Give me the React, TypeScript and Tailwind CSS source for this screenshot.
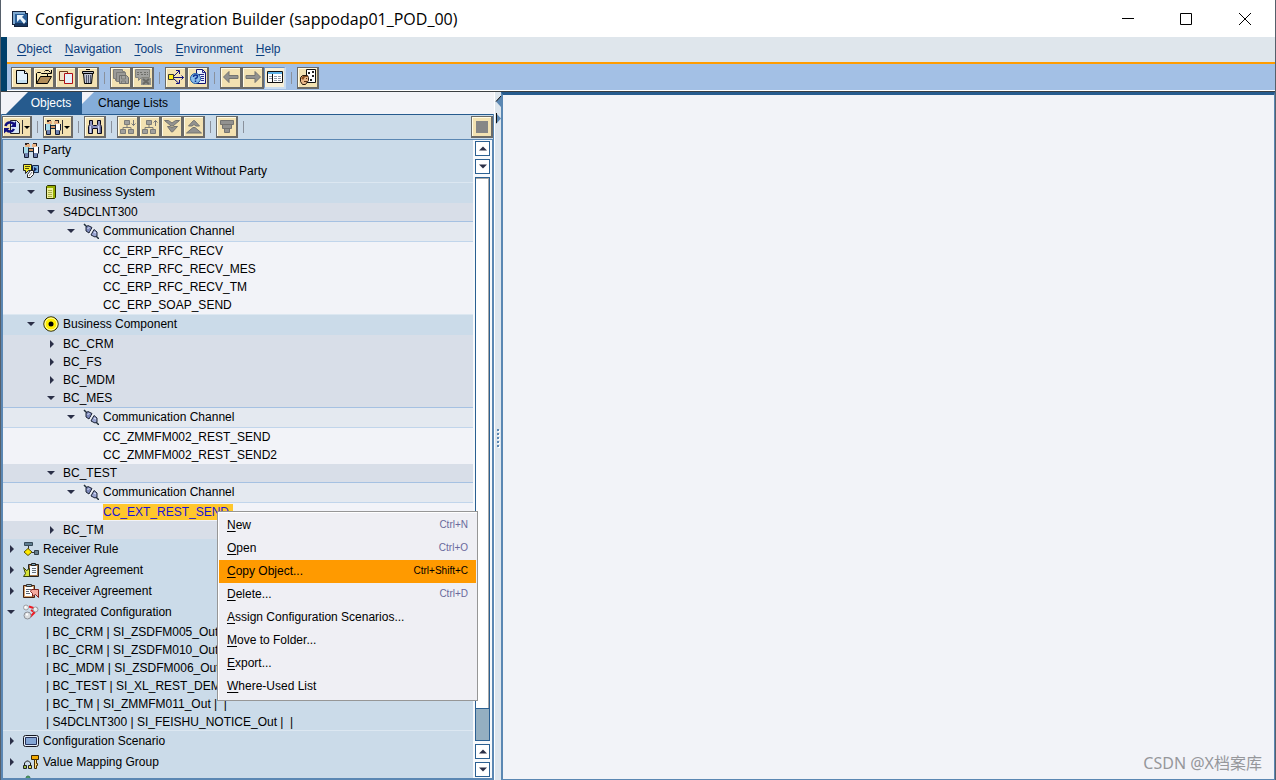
import { useState } from "react";
import type { ReactNode } from "react";
import clsx from "clsx";

function Icon({ children, w = 16, h = 16 }: { children: ReactNode; w?: number; h?: number }) {
  return (
    <svg width={w} height={h} viewBox={`0 0 ${w} ${h}`} fill="none" className="shrink-0" aria-hidden="true">
      {children}
    </svg>
  );
}

const AppIcon = () => (
  <Icon>
    <path d="M0 0h14v2h2v14H2v-2H0z" fill="#14233c" />
    <path d="M1 1h12v2H3v10H1z" fill="#7fa9d0" />
    <path d="M3 3h12v12H3z" fill="#2a5f98" />
    <path d="M3 12h12v3H3z" fill="#17365f" />
    <path d="M5 4h7l-2 2 4 4-2 3-4-5-3 3z" fill="#eaf5fd" />
  </Icon>
);

const NewIcon = () => (
  <Icon>
    <path d="M2.5 1.5h8l3 3v10h-11z" fill="#e3f1fa" stroke="#000" />
    <path d="M10.5 1.5v3h3" fill="#fff" stroke="#000" />
    <path d="M3 11h10v3H3z" fill="#c3dff0" />
  </Icon>
);

const OpenIcon = () => (
  <Icon>
    <path d="M.5 14.500v-10l1-1h3l1 1h6v3" fill="#f6e7b0" stroke="#000" />
    <path d="M.5 14.500l4-7h11l-4 7z" fill="#b08c58" stroke="#000" />
    <path d="M8.500 2.500l1-1h3l2 2M15.500 1v3.500H12" stroke="#000" />
  </Icon>
);

const CopyIcon = () => (
  <Icon>
    <path d="M1.500 2.500h8v9h-8z" fill="#f0e2c8" stroke="#6b3a1d" />
    <path d="M6.500 4.500h8v10h-8z" fill="#e4f0fa" stroke="#b00d14" />
  </Icon>
);

const TrashIcon = () => (
  <Icon>
    <path d="M6 .5h4M2.500 2.500h11v2h-11z" fill="#b8bcc8" stroke="#000" />
    <path d="M3.500 4.500h9l-1 10h-7z" fill="#c0c4d2" stroke="#000" />
    <path d="M6.500 6v8M8.500 6v8M10.500 6v8" stroke="#50566c" />
  </Icon>
);

const CopiesIcon = () => (
  <Icon>
    <path d="M.5.5h9v2h2v9h-9v-2h-2z" fill="#9a9a97" stroke="#7c7c79" />
    <path d="M3.500 3.500h9v9h-9z" fill="#9a9a97" stroke="#7c7c79" />
    <path d="M6.500 6.500h7l2 2v6h-9z" fill="#a2a29f" stroke="#6f6f6c" />
    <path d="M8.500 7v3h4V7M8.500 14v-2h4v2" stroke="#7c7c79" />
  </Icon>
);

const CancelIcon = () => (
  <Icon>
    <path d="M.5.5h14v8h-8l-3 3v-3h-3z" fill="#a2a29f" stroke="#84847e" />
    <path d="M2 3.500h6M9 3.500h4M2 5.500h3M6 5.500h7" stroke="#6f6f6a" strokeDasharray="2 1" />
    <path d="M6 9h10v7H6z" fill="#93938f" />
    <path d="M8 10l6 5M14 10l-6 5" stroke="#6a6a66" strokeWidth="2" />
  </Icon>
);

const WhereIcon = () => (
  <Icon>
    <path d="M5 8.500h10.500M6 7l5-5M6 10l5 4.500M8 1.500h3.500V5M13.500 6.500l2 2-2 2M8 14.500h3.500V11" stroke="#10107c" />
    <path d="M.5 5.500h5v5h-5z" fill="#ffee1c" stroke="#333" />
  </Icon>
);

const HelpIcon = () => (
  <Icon>
    <path d="M6.500.5h6l3 3v11h-9z" fill="#e8f1fb" stroke="#10106c" />
    <path d="M12.500.5v3h3M9 5.500h5M11 7.500h3M11 9.500h3M11 11.500h3" stroke="#29298b" />
    <circle cx="5.500" cy="9.500" r="5" fill="#8cc0ec" stroke="#1c5aa0" />
    <path d="M3.500 8q0-2 2-2t2 1.500-2 2v1M5.500 11.500v1.500" stroke="#0c2f94" strokeWidth="1.500" />
  </Icon>
);

const BackIcon = () => (
  <Icon>
    <path d="M.5 8L6 2.500v4h9v3H6v4z" fill="#929290" stroke="#747471" />
  </Icon>
);

const ForwardIcon = () => (
  <Icon>
    <path d="M15.500 8L10 2.500v4H1v3h9v4z" fill="#929290" stroke="#747471" />
  </Icon>
);

const ListIcon = () => (
  <Icon>
    <path d="M.5 2.500h15v11H.5z" fill="#fff" stroke="#111" />
    <path d="M1 3h14v2H1z" fill="#5cb2e8" />
    <path d="M2 7.500h3M2 9.500h3M7 7.500h3M11 7.500h3M7 9.500h3M11 9.500h3M7 11.500h3M11 11.500h3" stroke="#8f9aa8" />
    <path d="M5.500 5v8" stroke="#111" />
  </Icon>
);

const UserIcon = () => (
  <Icon>
    <path d="M6.500.5h9v13h-9z" fill="#fff" stroke="#111" />
    <path d="M8 3h2v2H8zM12 2h2v2h-2zM12 6h2v2h-2zM10 10h2v2h-2z" fill="#222" />
    <path d="M.5 8.500l2-2h5l1 2v3l-3 4h-3l-2-3z" fill="#e8b688" stroke="#2b1a0c" />
    <path d="M1 9l2-2h5v1H5l-2 3z" fill="#8a4f20" />
    <path d="M6 9.500h1M4 12.500h3" stroke="#5a2f10" />
  </Icon>
);

const RefreshIcon = () => (
  <Icon w={17}>
    <path d="M6.500 1.500h6l3 3v10h-9z" fill="#d7e7f6" stroke="#222" />
    <path d="M1.500 7c1-4 6-4.500 8.500-2M10 10c-2 3.500-5.500 3-7.500 1" stroke="#101080" strokeWidth="2.500" />
    <path d="M12 2v6H6.500zM0 14.500V9h5.500z" fill="#101080" />
  </Icon>
);

const PartyIcon = () => (
  <Icon>
    <path d="M2 1h4v1h1v3H2z" fill="#e9b284" />
    <path d="M2 1h4v1H4v1H2z" fill="#2b2222" />
    <path d="M10 1h4v4H9V2h1z" fill="#e9b284" />
    <path d="M10 1h4v3h-1V2h-3z" fill="#2b2222" />
    <path d="M1 5h5v6H1z" fill="#a8dcea" />
    <path d="M10 5h5v6h-5z" fill="#fff" />
    <path d="M5 7h6v2H5z" fill="#d89462" />
    <path d="M6 6.500h4M6 9.500h4" stroke="#15303d" />
    <path d="M2 11h3v4H2zM11 11h3v4h-3z" fill="#6d80ae" />
    <path d="M.5 5v6l1 1v3.500h4V5.500M15.500 5v6l-1 1v3.500h-4V5.500" stroke="#151c33" />
  </Icon>
);

const FindIcon = () => (
  <Icon>
    <path d="M2.500 1.500h3v4l1 1h3l1-1v-4h3v4l1 2v7h-4v-5h-5v5h-4v-7l1-2z" fill="#9096c0" stroke="#08081a" />
    <path d="M3.500 7v7M11.500 7v7" stroke="#d3d7ee" />
    <path d="M5 7v3M13.500 7v7" stroke="#5c628e" />
  </Icon>
);

const OrgIcon = ({ up = false }: { up?: boolean }) => (
  <Icon>
    <path d="M4.500 1.500h5v4h-5zM.5 10.500h5v4h-5zM8.500 10.500h5v4h-5z" fill="#a0a09d" stroke="#7c7c79" />
    <path d="M7 6v2M3 10V8.500h8V10" stroke="#7c7c79" />
    {up ? <path d="M13.500 7V1.500M11.500 3.500l2-2 2 2" stroke="#777" /> : <path d="M13.500 1v5.500M11.500 4.500l2 2 2-2" stroke="#777" />}
  </Icon>
);

const DownIcon = () => (
  <Icon>
    <path d="M.5 1.500h4L8 4l3.500-2.500h4L9 7H7zM3.500 7.500H6L8 9l2-1.500h3.500L8.500 13h-1z" fill="#929290" stroke="#747471" />
  </Icon>
);

const UpIcon = () => (
  <Icon>
    <path d="M7.500 1.500h1L13.500 7H10L8 5.500 6 7H2.500zM7 8.500h2l6.500 5.500H.5z" fill="#929290" stroke="#747471" />
  </Icon>
);

const FilterIcon = () => (
  <Icon>
    <path d="M1.500 1.500h13v4h-13zM3.500 5.500h9v4h-9zM5.500 9.500h5v4h-5z" fill="#929290" stroke="#747471" />
  </Icon>
);

const StopIcon = () => (
  <Icon w={12} h={12}>
    <path d="M0 0h12v12H0z" fill="#868686" />
  </Icon>
);

const ComponentIcon = () => (
  <Icon>
    <path d="M.5 1.500h8v6h-3l-3 3v-3h-2z" fill="#f5ec2d" stroke="#222" />
    <path d="M2 3.500h5M2 5.500h4" stroke="#4f4b10" />
    <path d="M9.500 2.500h6v7h-6z" fill="#7db0df" stroke="#13284a" />
    <path d="M11 4l3 2-3 3z" fill="#0e1f58" />
    <path d="M4.500 11.500l3-4h3v4l-3 3h-3z" fill="#fff" stroke="#222" />
    <path d="M6 13l3-4" stroke="#777" />
  </Icon>
);

const SystemIcon = () => (
  <Icon>
    <path d="M3.500 2.500l1-1h8v12l-1 1h-8z" fill="#96ad00" stroke="#2b3000" />
    <path d="M4 4h6v10H4z" fill="#edf09b" />
    <path d="M5 6.500h4M5 8.500h4M5 10.500h4M5 12.500h4" stroke="#a9ad48" />
  </Icon>
);

const BusinessIcon = () => (
  <Icon>
    <circle cx="8" cy="8" r="7.200" fill="#ffef00" stroke="#25220a" />
    <circle cx="8" cy="8" r="6" stroke="#fffbc0" />
    <circle cx="8" cy="8" r="2.500" fill="#000" />
  </Icon>
);

const ChannelIcon = () => (
  <Icon>
    <path d="M1 1l3 3M12 12l4 4" stroke="#22303c" strokeWidth="1.500" />
    <path d="M3 4l2-1.500 4 2-3 5.500-3-2z" fill="#7d89bb" stroke="#1c2436" />
    <path d="M11 6.500l3 2.500v4l-2 1-4-2z" fill="#98a3d0" stroke="#1c2436" />
    <path d="M4.500 5.500l2-1M11 9l2 1" stroke="#e3e8fa" />
    <path d="M6.500 11L10 5.500" stroke="#f2f5fa" />
  </Icon>
);

const RuleIcon = () => (
  <Icon>
    <path d="M1.500 1.500h8v3h-8z" fill="#5e7d8f" stroke="#384b58" />
    <path d="M5.500 5v3M9 11.500h2" stroke="#333" />
    <path d="M5 7.500L9 11l-4 3.500L1 11z" fill="#ffe900" stroke="#5a5200" />
    <path d="M11.500 9.500h4v4h-4z" fill="#68808e" stroke="#333f48" />
  </Icon>
);

const SenderIcon = () => (
  <Icon>
    <path d="M5.500 2.500h10v12h-10z" fill="#a67849" stroke="#222" />
    <path d="M7 4h7v9H7z" fill="#f5faff" />
    <path d="M8.500 1.500h4v2h-4z" fill="#7ba7bd" stroke="#222" />
    <path d="M9 6.500h4M9 8.500h4M9 10.500h4" stroke="#68717c" />
    <path d="M.5 5.500l3 3 3-2v8h-6l2-3z" fill="#d6e338" stroke="#37400a" />
  </Icon>
);

const ReceiverIcon = () => (
  <Icon>
    <path d="M.5 2.500h11v12H.5z" fill="#d39e6b" stroke="#442211" />
    <path d="M2 4h8v9H2z" fill="#fff" />
    <path d="M3.500 1.500h5v2h-5z" fill="#9dbfd2" stroke="#333" />
    <path d="M3 6.500h5M3 8.500h3M3 10.500h4" stroke="#5b6370" />
    <path d="M7.500 8.500l1-2h7v8l-3-3-3 2v-3z" fill="#f5aaa0" stroke="#7c201c" />
  </Icon>
);

const IntegratedIcon = () => (
  <Icon>
    <path d="M6 2.500l6 2M8 6l3 2M12 8l-5 5" stroke="#ee1c24" strokeWidth="2" />
    <circle cx="3" cy="3.500" r="2.500" fill="#eceef0" stroke="#9b9fa5" />
    <circle cx="12.500" cy="5.500" r="2.500" fill="#e4e6e9" stroke="#92969c" />
    <circle cx="4.500" cy="11.500" r="3.500" fill="#dadde0" stroke="#8b8f96" />
    <path d="M3 10.500h2M11.500 4.500h1M2 3h1" stroke="#fff" strokeWidth="2" />
  </Icon>
);

const ScenarioIcon = () => (
  <Icon>
    <rect x=".5" y="2.500" width="15" height="11" rx="2" fill="#e3ecf5" stroke="#16161f" />
    <path d="M2.500 4.500h11v7h-11z" fill="#84a6d5" stroke="#27335c" />
  </Icon>
);

const MappingIcon = () => (
  <Icon>
    <path d="M8.500 1.500h7v4h-7z" fill="#f2a900" stroke="#3a2400" />
    <path d="M11.500 5.500v9h2v-3h1v-2h-1v-4z" fill="#ffd879" stroke="#4b3000" />
    <path d="M1.500 11V9l2-2h2l2 2v2" stroke="#1d1d1d" />
    <path d="M.5 11.500h3v3h-3z" fill="#9cc24a" stroke="#222" />
    <path d="M5.500 11.500h3v3h-3z" fill="#ece04c" stroke="#222" />
  </Icon>
);

const GroupIcon = () => (
  <Icon>
    <circle cx="5" cy="3" r="2" fill="#4c9b62" stroke="#3a7a55" />
    <path d="M1 15q0-9 4-9t4 9" fill="#5fae74" />
  </Icon>
);

function ToolButton({ label, children, active, drop }: { label: string; children: ReactNode; active?: boolean; drop?: boolean }) {
  return (
    <button
      type="button"
      aria-label={label}
      title={label}
      className={clsx(
        "flex h-[22px] shrink-0 items-center justify-center border-t border-r-2 border-b-2 border-l",
        drop ? "w-[30px]" : "w-[22px]",
        active
          ? "border-[#6f93c0] border-r-[#c9dcf0] border-b-[#c9dcf0] bg-[#f7efd8]"
          : "border-[#6a6a68] bg-[#f3e2b2] shadow-[inset_1px_1px_0_#fffbe6]",
      )}
    >
      {children}
      {drop && (
        <svg width="9" height="16" viewBox="0 0 9 16" aria-hidden="true">
          <path d="M1 1h1v14H1z" fill="#333" />
          <path d="M3 7h6L6 10z" fill="#000" />
        </svg>
      )}
    </button>
  );
}

const Separator = () => (
  <span className="flex w-[11px] shrink-0 justify-center">
    <span className="h-3 w-px bg-[#8a919c]" />
  </span>
);

type Kind = "top" | "folder" | "channel" | "leaf" | "entry";

interface TreeRow {
  label: string;
  kind: Kind;
  level: number;
  icon?: ReactNode;
  open?: boolean;
  selected?: boolean;
  last?: boolean;
}

const rows: TreeRow[] = [
  { label: "Party", kind: "top", level: 0, icon: <PartyIcon /> },
  { label: "Communication Component Without Party", kind: "top", level: 0, icon: <ComponentIcon />, open: true },
  { label: "Business System", kind: "top", level: 1, icon: <SystemIcon />, open: true },
  { label: "S4DCLNT300", kind: "folder", level: 2, open: true },
  { label: "Communication Channel", kind: "channel", level: 3, icon: <ChannelIcon />, open: true },
  { label: "CC_ERP_RFC_RECV", kind: "leaf", level: 4 },
  { label: "CC_ERP_RFC_RECV_MES", kind: "leaf", level: 4 },
  { label: "CC_ERP_RFC_RECV_TM", kind: "leaf", level: 4 },
  { label: "CC_ERP_SOAP_SEND", kind: "leaf", level: 4 },
  { label: "Business Component", kind: "top", level: 1, icon: <BusinessIcon />, open: true },
  { label: "BC_CRM", kind: "folder", level: 2, open: false },
  { label: "BC_FS", kind: "folder", level: 2, open: false },
  { label: "BC_MDM", kind: "folder", level: 2, open: false },
  { label: "BC_MES", kind: "folder", level: 2, open: true },
  { label: "Communication Channel", kind: "channel", level: 3, icon: <ChannelIcon />, open: true },
  { label: "CC_ZMMFM002_REST_SEND", kind: "leaf", level: 4 },
  { label: "CC_ZMMFM002_REST_SEND2", kind: "leaf", level: 4 },
  { label: "BC_TEST", kind: "folder", level: 2, open: true },
  { label: "Communication Channel", kind: "channel", level: 3, icon: <ChannelIcon />, open: true },
  { label: "CC_EXT_REST_SEND", kind: "leaf", level: 4, selected: true },
  { label: "BC_TM", kind: "folder", level: 2, open: false },
  { label: "Receiver Rule", kind: "top", level: 0, icon: <RuleIcon />, open: false },
  { label: "Sender Agreement", kind: "top", level: 0, icon: <SenderIcon />, open: false },
  { label: "Receiver Agreement", kind: "top", level: 0, icon: <ReceiverIcon />, open: false },
  { label: "Integrated Configuration", kind: "top", level: 0, icon: <IntegratedIcon />, open: true },
  { label: "| BC_CRM | SI_ZSDFM005_Out", kind: "entry", level: 1 },
  { label: "| BC_CRM | SI_ZSDFM010_Out", kind: "entry", level: 1 },
  { label: "| BC_MDM | SI_ZSDFM006_Out", kind: "entry", level: 1 },
  { label: "| BC_TEST | SI_XL_REST_DEM", kind: "entry", level: 1 },
  { label: "| BC_TM | SI_ZMMFM011_Out |  |", kind: "entry", level: 1 },
  { label: "| S4DCLNT300 | SI_FEISHU_NOTICE_Out |  |", kind: "entry", level: 1, last: true },
  { label: "Configuration Scenario", kind: "top", level: 0, icon: <ScenarioIcon />, open: false },
  { label: "Value Mapping Group", kind: "top", level: 0, icon: <MappingIcon />, open: false },
  { label: "", kind: "top", level: 0, icon: <GroupIcon /> },
];

const indent = ["pl-0", "pl-5", "pl-10", "pl-[60px]", "pl-20"];

const rowStyle: Record<Kind, string> = {
  top: "h-[21px] bg-[#cbdbe9] pb-[2px]",
  folder: "h-[18px] bg-[#d8dee8]",
  channel: "h-[21px] border-t border-t-[#a5c1e2] border-b border-b-[#c1d5eb] bg-[#e4e9f0] pb-px",
  leaf: "h-[18px] bg-[#f2f3f8]",
  entry: "h-[18px] bg-[#cbdbe9]",
};

function Row({ row }: { row: TreeRow }) {
  const expandable = row.open !== undefined;
  return (
    <li
      role="treeitem"
      aria-level={row.level + 1}
      aria-expanded={row.open}
      aria-selected={!!row.selected}
      className={clsx(
        "flex shrink-0 items-center",
        rowStyle[row.kind],
        indent[row.level],
        row.level === 1 && row.kind === "top" && "border-t border-[#dce7f1]",
        row.last && "border-b border-[#dce7f1]",
      )}
    >
      {row.kind !== "entry" && (
        <span className="flex w-5 shrink-0 items-center pl-1">
          {expandable && (
            <button type="button" aria-label={`${row.open ? "Collapse" : "Expand"} ${row.label}`} className="flex size-2 items-center justify-center">
              <svg width="8" height="8" viewBox="0 0 8 8" aria-hidden="true">
                <path d={row.open ? "M0 2h8L4 6z" : "M3 0l4 4-4 4z"} fill="#2a2f47" />
              </svg>
            </button>
          )}
        </span>
      )}
      {row.icon && <span className="flex w-5 shrink-0">{row.icon}</span>}
      <span
        className={clsx(
          "leading-4 whitespace-pre",
          row.kind === "entry" && "pl-[23px]",
          row.selected && "bg-[#ffc72c] pr-1 text-[#1a12d8]",
        )}
      >
        {row.label}
      </span>
    </li>
  );
}

const menuItems = [
  { label: "New", keys: "Ctrl+N" },
  { label: "Open", keys: "Ctrl+O" },
  { label: "Copy Object...", keys: "Ctrl+Shift+C" },
  { label: "Delete...", keys: "Ctrl+D" },
  { label: "Assign Configuration Scenarios..." },
  { label: "Move to Folder..." },
  { label: "Export..." },
  { label: "Where-Used List" },
];

function ContextMenu() {
  const [current, setCurrent] = useState("Copy Object...");
  return (
    <div
      role="menu"
      className="absolute top-[511px] left-[216px] z-10 flex w-[261px] flex-col border border-[#969696] bg-[#efeff4] px-px py-[2px] shadow-[inset_1px_1px_0_#fff]"
    >
      {menuItems.map((item) => (
        <button
          key={item.label}
          type="button"
          role="menuitem"
          onMouseEnter={() => setCurrent(item.label)}
          className={clsx("flex h-[23px] items-center justify-between px-2 pb-[2px] text-left", current === item.label && "bg-[#ff9a00]")}
        >
          <span>
            <u className="underline-offset-2">{item.label[0]}</u>
            {item.label.slice(1)}
          </span>
          {item.keys && <span className={clsx("pt-px text-[10px]", current !== item.label && "text-[#6a6a9c]")}>{item.keys}</span>}
        </button>
      ))}
    </div>
  );
}

function ScrollArrow({ up }: { up?: boolean }) {
  return (
    <button
      type="button"
      aria-label={up ? "Scroll up" : "Scroll down"}
      className="flex h-[15px] w-[15px] items-center justify-center border border-[#2b6092] bg-white"
    >
      <svg width="8" height="5" viewBox="0 0 8 5" aria-hidden="true">
        <path d={up ? "M0 4.500h8L4 .5z" : "M0 .5h8l-4 4z"} fill="#2a2f47" />
      </svg>
    </button>
  );
}

export default function App() {
  return (
    <div className="relative flex h-screen flex-col overflow-hidden border-x border-[#56606b] bg-[#f2f3f8] font-['Liberation_Sans',Arial,sans-serif] text-xs text-black">
      <header className="flex h-[37px] shrink-0 items-center bg-white">
        <div className="flex items-center gap-[7px] pl-[11px]">
          <AppIcon />
          <h1 className="font-['Open_Sans','Noto_Sans',sans-serif] text-base">Configuration: Integration Builder (sappodap01_POD_00)</h1>
        </div>
        <div className="ml-auto flex">
          <button type="button" aria-label="Minimize" className="flex w-[58px] justify-center">
            <svg width="12" height="12" viewBox="0 0 12 12">
              <path d="M0 5.500h12" stroke="#000" />
            </svg>
          </button>
          <button type="button" aria-label="Maximize" className="flex w-[58px] justify-center">
            <svg width="12" height="12" viewBox="0 0 12 12">
              <path d="M.5.5h11v11H.5z" stroke="#000" fill="none" />
            </svg>
          </button>
          <button type="button" aria-label="Close" className="flex w-[60px] justify-center">
            <svg width="12" height="12" viewBox="0 0 12 12">
              <path d="M0 0l12 12M12 0L0 12" stroke="#000" />
            </svg>
          </button>
        </div>
      </header>

      <div className="flex shrink-0 flex-col border-l-[6px] border-[#00406a]">
        <nav className="flex h-[25px] items-center gap-[13px] bg-[#dfe6ec] pb-px pl-[10px] text-[#0b4080]">
          {["Object", "Navigation", "Tools", "Environment", "Help"].map((m) => (
            <button key={m} type="button">
              <u className="underline-offset-2">{m[0]}</u>
              {m.slice(1)}
            </button>
          ))}
        </nav>
        <div className="h-[2px] bg-[#ff9c00]" />
        <div role="toolbar" aria-label="Main" className="flex h-[27px] items-center border-b border-white bg-[#a3c0e5] pt-px pl-1">
          <ToolButton label="New"><NewIcon /></ToolButton>
          <ToolButton label="Open"><OpenIcon /></ToolButton>
          <ToolButton label="Copy"><CopyIcon /></ToolButton>
          <ToolButton label="Delete"><TrashIcon /></ToolButton>
          <Separator />
          <ToolButton label="Activate"><CopiesIcon /></ToolButton>
          <ToolButton label="Reject"><CancelIcon /></ToolButton>
          <Separator />
          <ToolButton label="Where used"><WhereIcon /></ToolButton>
          <ToolButton label="Help"><HelpIcon /></ToolButton>
          <Separator />
          <ToolButton label="Back"><BackIcon /></ToolButton>
          <ToolButton label="Forward"><ForwardIcon /></ToolButton>
          <ToolButton label="Navigation area" active><ListIcon /></ToolButton>
          <Separator />
          <ToolButton label="User settings"><UserIcon /></ToolButton>
        </div>
      </div>

      <main className="flex min-h-0 flex-1 border-t border-[#3b3f42]">
        <section className="flex w-[493px] shrink-0 flex-col">
          <div role="tablist" className="flex h-[22px] shrink-0 pl-[5px]">
            <button type="button" role="tab" aria-selected="true" className="w-[76px] bg-[#265b8e] pl-[14px] text-white [clip-path:polygon(22px_0,100%_0,100%_100%,0_100%)]">
              Objects
            </button>
            <button type="button" role="tab" aria-selected="false" className="w-[98px] bg-[#84add9] pl-1 [clip-path:polygon(12px_0,100%_0,100%_100%,0_100%,0_12px)]">
              Change Lists
            </button>
          </div>
          <div className="flex min-h-0 flex-1 flex-col border-2 border-t-0 border-[#5b87b3]">
            <div role="toolbar" aria-label="Objects" className="-mx-px flex h-[26px] shrink-0 items-center border-y border-t-[#265b8e] border-b-[#5b87b3] bg-[#cbdbe9]">
              <ToolButton label="Refresh" drop><RefreshIcon /></ToolButton>
              <Separator />
              <ToolButton label="Parties" drop><PartyIcon /></ToolButton>
              <Separator />
              <ToolButton label="Find"><FindIcon /></ToolButton>
              <Separator />
              <ToolButton label="Expand level"><OrgIcon /></ToolButton>
              <ToolButton label="Collapse level"><OrgIcon up /></ToolButton>
              <ToolButton label="Expand all"><DownIcon /></ToolButton>
              <ToolButton label="Collapse all"><UpIcon /></ToolButton>
              <Separator />
              <ToolButton label="Filter"><FilterIcon /></ToolButton>
              <Separator />
              <span className="ml-auto flex">
                <ToolButton label="Stop"><StopIcon /></ToolButton>
              </span>
            </div>
            <div className="flex min-h-0 flex-1">
              <ul role="tree" aria-label="Objects" className="flex min-w-0 flex-1 flex-col overflow-hidden bg-[#cbdbe9]">
                {rows.map((row, i) => (
                  <Row key={i} row={row} />
                ))}
              </ul>
              <div className="flex w-[19px] shrink-0 flex-col items-center gap-[3px] bg-[#f7f9fb] py-px">
                <ScrollArrow up />
                <ScrollArrow />
                <div className="flex w-[15px] flex-1 flex-col justify-end border border-[#2b6092] bg-white shadow-[inset_-1px_1px_0_#a9a9a9]">
                  <div className="h-8 border-t border-[#2b6092] bg-[#94afc1]" />
                </div>
                <ScrollArrow up />
                <ScrollArrow />
              </div>
            </div>
          </div>
        </section>

        <div className="flex w-[7px] shrink-0 flex-col items-center border-l border-white bg-[#dde5ed] pt-1 pb-7">
          <svg width="6" height="28" viewBox="0 0 6 28" className="shrink-0" aria-hidden="true">
            <path d="M6 0v11L1 5.500z" fill="#5b87b3" />
            <path d="M1 17v11l5-5.500z" fill="#5b87b3" />
            <path d="M6 0L1 5.500M1.500 17v10" stroke="#111" />
          </svg>
          <span className="my-auto flex flex-col gap-[2px]">
            {Array.from({ length: 5 }, (_, i) => (
              <span key={i} className="size-[2px] bg-[#5b87b3] shadow-[1px_1px_0_#fff]" />
            ))}
          </span>
        </div>

        <section className="flex flex-1 items-end justify-end border-2 border-t-[3px] border-r border-b border-[#5b87b3] border-t-[#265b8e]">
          <p className="pr-3 pb-1 font-['Noto_Sans','Noto_Sans_CJK_SC',sans-serif] text-base text-[#96979b]">CSDN @X档案库</p>
        </section>
      </main>

      <ContextMenu />
    </div>
  );
}
